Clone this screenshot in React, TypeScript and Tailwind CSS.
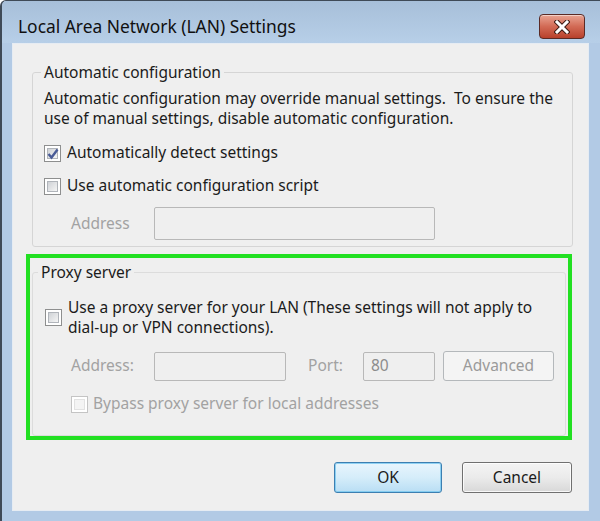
import React from "react";

const font = { fontFamily: '"Noto Sans", "Open Sans", Arial, sans-serif' };

function CheckBox({ checked = false, disabled = false }: { checked?: boolean; disabled?: boolean }) {
  return (
    <div
      className={`relative w-[17px] h-[17px] shrink-0 border p-[2px] bg-white ${
        disabled ? "border-[#c4c4c4]" : "border-[#8e8f8f]"
      }`}
    >
      <div
        className={`w-full h-full border ${
          disabled
            ? "border-[#e2e2e2] bg-[#f4f4f4]"
            : "border-[#b0b4ba] bg-gradient-to-br from-[#cfd2d6] to-[#f5f5f5]"
        }`}
      />
      {checked && (
        <svg className="absolute left-[1px] top-[1px]" width="14" height="14" viewBox="0 0 14 14">
          <path d="M2.5 7 L5.5 10.5 L11.5 2.5" fill="none" stroke="#4a5c97" strokeWidth="2.4" />
        </svg>
      )}
    </div>
  );
}

function TextBox({ w, h, value }: { w: string; h: string; value?: string }) {
  return (
    <div
      className={`${w} ${h} border border-[#b8b8b8] rounded-[2px] bg-[#efefef] flex items-center px-[7px] text-[#8c8c8c]`}
    >
      {value}
    </div>
  );
}

export default function App() {
  return (
    <div
      className="w-[600px] h-[521px] flex flex-col bg-[#b2cae5] border-l-2 border-t border-[#3f4a57] rounded-tl-[6px] overflow-hidden text-[15.5px] text-[#1b1b1b]"
      style={font}
    >
      {/* title bar */}
      <div className="h-[42px] shrink-0 flex items-start justify-between pl-[16px] pr-[15px] bg-gradient-to-b from-[#a7bfd9] to-[#b7cfe8]">
        <div className="mt-[14px] text-[17.4px] leading-[22px] text-[#101010]">Local Area Network (LAN) Settings</div>
        <div className="mt-[13px] w-[46px] h-[25px] rounded-[4px] border border-[#5b2b26] bg-gradient-to-b from-[#e8a493] via-[#d26a55] to-[#b8402b] flex items-center justify-center shadow-[inset_0_1px_0_rgba(255,255,255,0.5)]">
          <svg width="16" height="14" viewBox="0 0 16 14">
            <path d="M3 2 L13 12 M13 2 L3 12" stroke="#3b1a14" strokeWidth="5" strokeLinecap="square" />
            <path d="M3 2 L13 12 M13 2 L3 12" stroke="#ffffff" strokeWidth="3" strokeLinecap="square" />
          </svg>
        </div>
      </div>

      {/* client area */}
      <div className="ml-[10px] mr-[11px] h-[468px] shrink-0 bg-[#efefef] border border-[#e6ecf3] flex flex-col">
        {/* Automatic configuration */}
        <fieldset className="ml-[19px] mr-[15px] mt-[18px] border border-[#d5d5d5] rounded-[3px] pl-[11px] pb-[5px] h-[185px]">
          <legend className="-ml-[3px] px-[3px] leading-[20px]">Automatic configuration</legend>
          <div className="mt-[6px] leading-[20px]">
            Automatic configuration may override manual settings.&nbsp; To ensure the
            <br />
            use of manual settings, disable automatic configuration.
          </div>
          <div className="mt-[15px] flex items-center gap-[6px] h-[20px]">
            <CheckBox checked />
            <span>Automatically detect settings</span>
          </div>
          <div className="mt-[13px] flex items-center gap-[6px] h-[20px]">
            <CheckBox />
            <span>Use automatic configuration script</span>
          </div>
          <div className="mt-[11px] flex items-center h-[33px]">
            <span className="w-[110px] pl-[27px] text-[#a2a2a2]">Address</span>
            <TextBox w="w-[281px]" h="h-[33px]" />
          </div>
        </fieldset>

        {/* Proxy server, highlighted */}
        <div className="ml-[13px] mr-[16px] mt-[7px] h-[186px] border-[4px] border-[#22e022] pl-[2px] pr-[2px] pt-[4px]">
          <fieldset className="border border-[#dcdcdc] rounded-[3px] pl-[12px] h-[174px]">
            <legend className="-ml-[7px] px-[3px] leading-[20px]">Proxy server</legend>
            <div className="mt-[15px] flex items-center gap-[6px]">
              <CheckBox />
              <span className="leading-[20px]">
                Use a proxy server for your LAN (These settings will not apply to
                <br />
                dial-up or VPN connections).
              </span>
            </div>
            <div className="mt-[14px] flex items-center h-[30px]">
              <span className="w-[109px] pl-[26px] text-[#a2a2a2]">Address:</span>
              <TextBox w="w-[132px]" h="h-[29px]" />
              <span className="w-[77px] pl-[22px] text-[#a2a2a2]">Port:</span>
              <TextBox w="w-[72px]" h="h-[29px]" value="80" />
              <div className="ml-[8px] w-[111px] h-[30px] border border-[#b4b8bb] rounded-[3px] bg-[#f4f4f4] flex items-center justify-center text-[#9a9a9a]">
                Advanced
              </div>
            </div>
            <div className="mt-[13px] ml-[26px] flex items-center gap-[5px] h-[20px]">
              <CheckBox disabled />
              <span className="text-[#a2a2a2]">Bypass proxy server for local addresses</span>
            </div>
          </fieldset>
        </div>

        {/* buttons */}
        <div className="mt-[22px] mr-[16px] flex justify-end gap-[20px]">
          <div className="w-[108px] h-[31px] rounded-[3px] border border-[#3c7fb1] bg-gradient-to-b from-[#e8f5fd] via-[#d5edfa] to-[#b9def4] shadow-[inset_0_0_0_1px_rgba(120,200,240,0.8)] flex items-center justify-center">
            OK
          </div>
          <div className="w-[110px] h-[31px] rounded-[3px] border border-[#707070] bg-gradient-to-b from-[#f4f4f4] via-[#ebebeb] to-[#d8d8d8] shadow-[inset_0_0_0_1px_rgba(255,255,255,0.8)] flex items-center justify-center">
            Cancel
          </div>
        </div>
      </div>
    </div>
  );
}
